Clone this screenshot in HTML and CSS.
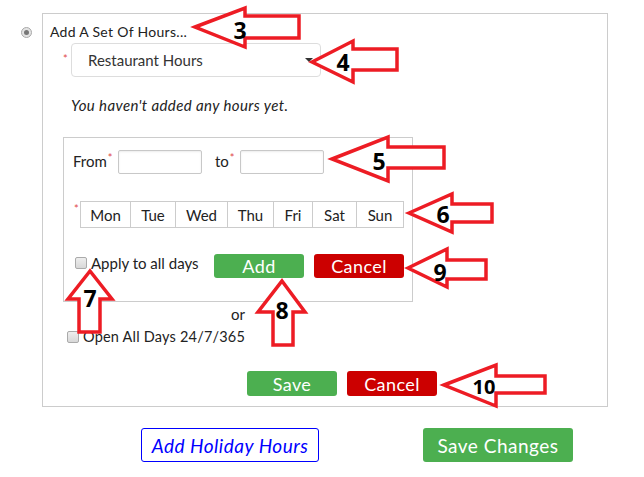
FILE: index.html
```html
<!DOCTYPE html>
<html>
<head>
<meta charset="utf-8">
<link rel="stylesheet" href="styles.css">
</head>
<body>
<div class="page">
  <div class="option">
    <span class="radio"><span class="dot"></span></span>
    <div class="panel">
      <div class="title">Add A Set Of Hours...</div>
      <div class="select-row">
        <span class="req">*</span>
        <div class="select">Restaurant Hours<span class="caret"></span></div>
      </div>
      <p class="empty">You haven't added any hours yet.</p>
      <div class="editor">
        <div class="times">
          <span class="lbl from">From<span class="req">*</span></span>
          <span class="input"></span>
          <span class="lbl to">to<span class="req">*</span></span>
          <span class="input"></span>
        </div>
        <div class="days-row">
          <span class="req">*</span>
          <div class="days">
            <span>Mon</span><span>Tue</span><span>Wed</span><span>Thu</span><span>Fri</span><span>Sat</span><span>Sun</span>
          </div>
        </div>
        <div class="actions">
          <label class="check apply"><span class="box"></span>Apply to all days</label>
          <button class="btn green small">Add</button>
          <button class="btn red small">Cancel</button>
        </div>
      </div>
      <div class="or">or</div>
      <label class="check open"><span class="box"></span>Open All Days 24/7/365</label>
      <div class="panel-actions">
        <button class="btn green mid">Save</button>
        <button class="btn red mid">Cancel</button>
      </div>
    </div>
  </div>
  <div class="footer">
    <button class="holiday">Add Holiday Hours</button>
    <button class="btn green big">Save Changes</button>
  </div>
</div>
<svg class="notes" width="644" height="477" viewBox="0 0 644 477">
  <g class="arrow">
    <polygon points="195,27 245,8 245,16 299,16 299,38 245,38 245,47"/>
    <polygon points="312,62 353,41 353,49 397,49 397,70 353,70 353,82"/>
    <polygon points="332,159 388,137 388,147 444,147 444,168 388,168 388,181"/>
    <polygon points="409,213 452,194 452,204 492,204 492,222 452,222 452,232"/>
    <polygon points="408,268 447,249 447,260 486,260 486,279 447,279 447,287"/>
    <polygon points="444,385 496,365 496,376 545,376 545,393 496,393 496,406"/>
    <polygon points="90,271 112,299 100,299 100,332 79,332 79,299 68,299"/>
    <polygon points="282,281 305,312 293,312 293,345 273,345 273,312 258,312"/>
  </g>
  <g class="num">
    <text x="240" y="39">3</text>
    <text x="343" y="71">4</text>
    <text x="379" y="170">5</text>
    <text x="443" y="223">6</text>
    <text x="440" y="281">9</text>
    <text x="484" y="394" class="sm">10</text>
    <text x="90" y="307">7</text>
    <text x="282" y="319">8</text>
  </g>
</svg>
</body>
</html>
```

FILE: styles.css
```css
* { box-sizing: border-box; }
body {
  margin: 0;
  font-family: "Lato", "Open Sans", sans-serif;
  color: #222;
  background: #fff;
}
.page { width: 644px; height: 477px; }
.option { display: flex; padding-top: 13px; }
.radio {
  margin: 14px 0 0 21px;
  width: 11px; height: 11px;
  border: 1px solid #a9a9a9;
  border-radius: 50%;
  background: #e3e3e3;
  display: flex; align-items: center; justify-content: center;
}
.radio .dot { width: 5px; height: 5px; border-radius: 50%; background: #777; }
.panel {
  margin-left: 10px;
  width: 566px; height: 394px;
  border: 1px solid #ccc;
  padding: 8px 0 0 7px;
}
.title { font-size: 14px; line-height: 20px; color: #222; letter-spacing: 0.3px; }
.req { color: #e04848; font-size: 11px; line-height: 11px; letter-spacing: 0; }
.select-row { display: flex; margin: 1px 0 0 13px; }
.select-row .req { width: 8px; margin-top: 10px; }
.select {
  width: 250px; height: 34px;
  border: 1px solid #ddd; border-radius: 4px;
  padding: 0 7px 0 16px;
  display: flex; align-items: center; justify-content: space-between;
  font-size: 15px; color: #333;
}
.caret {
  width: 0; height: 0;
  border-left: 4px solid transparent; border-right: 4px solid transparent;
  border-top: 4px solid #333;
}
.empty {
  margin: 19px 0 0 21px;
  font-style: italic; font-size: 15px; line-height: 18px; color: #222;
  letter-spacing: 0.4px;
}
.editor {
  margin: 23px 0 0 13px;
  width: 350px; height: 165px;
  border: 1px solid #ccc;
}
.times { display: flex; align-items: center; padding: 12px 0 0 9px; font-size: 15px; }
.lbl { display: flex; align-items: flex-start; margin-bottom: 3px; }
.lbl .req { margin-left: 1px; }
.lbl.from { width: 45px; }
.lbl.to { width: 25px; margin-left: 13px; }
.input {
  width: 84px; height: 24px;
  border: 1px solid #c8c8c8; border-radius: 2px;
  box-shadow: inset 0 1px 2px rgba(0,0,0,0.08);
}
.days-row { display: flex; margin: 27px 0 0 10px; }
.days-row .req { width: 6px; margin-top: 2px; }
.days {
  display: grid;
  grid-template-columns: 50px 45px 52px 46px 39px 44px 47px;
  height: 27px;
  border: 1px solid #ccc;
  border-right: none;
}
.days span {
  border-right: 1px solid #ccc;
  display: flex; align-items: center; justify-content: center;
  font-size: 15px; color: #222;
}
.actions { display: flex; align-items: flex-start; margin: 26px 0 0 11px; }
.check { display: flex; align-items: center; font-size: 15px; color: #222; line-height: 16px; }
.box {
  width: 12px; height: 12px;
  border: 1px solid #aaa; border-radius: 2px;
  background: linear-gradient(#eee, #d8d8d8);
  margin-right: 4px;
  flex: none;
}
.check.apply { width: 139px; margin-top: 1px; }
.btn {
  border: none; border-radius: 3px;
  color: #fff; font-family: inherit;
  display: flex; align-items: center; justify-content: center;
  padding: 0;
  letter-spacing: 0.4px;
}
.green { background: #4caf50; }
.red { background: #cc0000; }
.small { width: 90px; height: 24px; font-size: 18px; }
.actions .red { margin-left: 10px; }
.or { margin: 3px 0 0 181px; font-size: 15px; line-height: 18px; }
.check.open { margin: 6px 0 0 17px; font-size: 14.5px; letter-spacing: 0.2px; }
.panel-actions { display: flex; gap: 10px; margin: 26px 0 0 197px; }
.mid { width: 90px; height: 25px; font-size: 18px; }
.footer { display: flex; margin: 21px 0 0 141px; gap: 104px; }
.holiday {
  width: 178px; height: 34px;
  border: 1px solid #0000ff; border-radius: 3px;
  background: #fff; color: #0000ff;
  font-family: inherit; font-style: italic; font-size: 19px;
  letter-spacing: 0.5px;
  padding: 0;
}
.big { width: 150px; height: 34px; font-size: 19px; letter-spacing: 0.5px; }
.notes { position: absolute; left: 0; top: 0; }
.arrow polygon { fill: #fff; stroke: #ed1c24; stroke-width: 3.5; stroke-linejoin: miter; }
.num text {
  font-family: "Open Sans", sans-serif; font-weight: 700; font-size: 23px;
  fill: #000; text-anchor: middle;
}
.num text.sm { font-size: 20px; }
```
